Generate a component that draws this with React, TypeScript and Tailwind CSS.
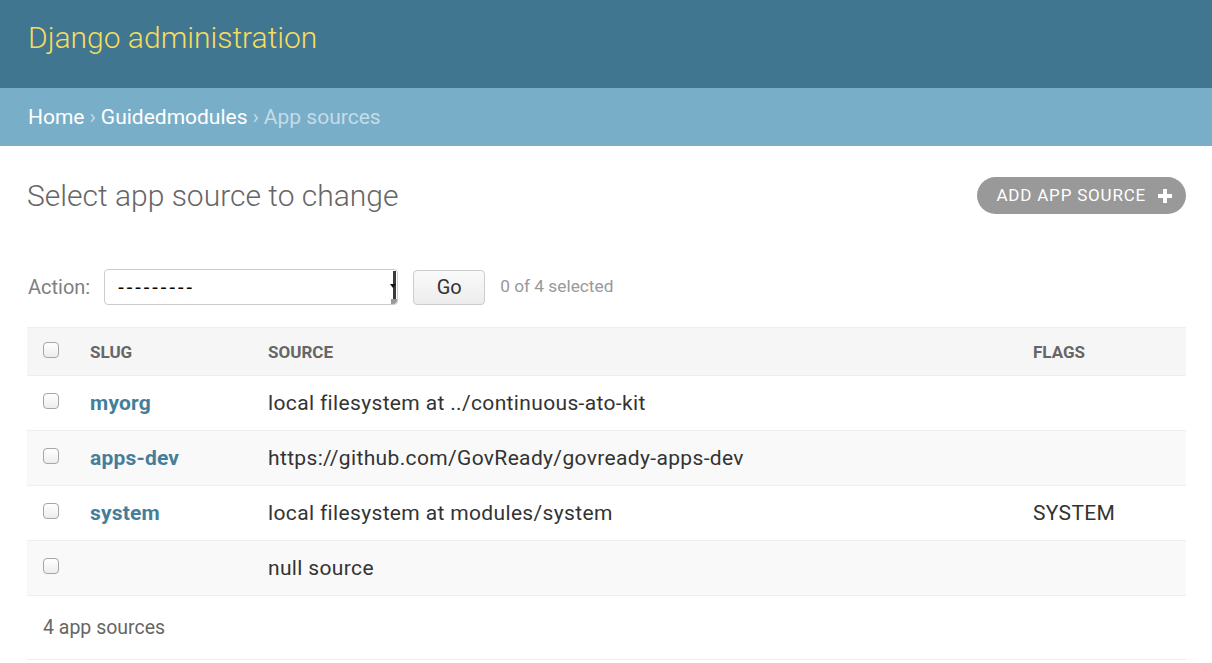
import React from "react";

function Checkbox() {
  return (
    <div className="w-[16px] h-[16px] rounded-[4px] border border-[#a6a6a6] bg-gradient-to-b from-[#ffffff] to-[#ededed]" />
  );
}

function PlusIcon() {
  return (
    <svg width="14" height="14" viewBox="0 0 14 14" className="block">
      <rect x="5" y="0" width="4" height="14" fill="#fff" />
      <rect x="0" y="5" width="14" height="4" fill="#fff" />
    </svg>
  );
}

const rows = [
  { slug: "myorg", source: "local filesystem at ../continuous-ato-kit", flags: "" },
  { slug: "apps-dev", source: "https://github.com/GovReady/govready-apps-dev", flags: "" },
  { slug: "system", source: "local filesystem at modules/system", flags: "SYSTEM" },
  { slug: "", source: "null source", flags: "" },
];

export default function App() {
  return (
    <div className="w-[1212px] h-[663px] overflow-hidden bg-white font-['Roboto','Liberation_Sans',sans-serif]">
      {/* Header */}
      <div className="h-[88px] bg-[#417690] pl-[28px] pt-[17px]">
        <div className="text-[30px] leading-[41px] font-light text-[#f5dd5d]">Django administration</div>
      </div>
      {/* Breadcrumbs */}
      <div className="h-[58px] bg-[#79aec8] pl-[28px] flex items-center text-[21px] text-[#c4dce8] pt-[1px]">
        <span className="text-white">Home</span>
        <span className="mx-[5px]">›</span>
        <span className="text-white">Guidedmodules</span>
        <span className="mx-[5px]">›</span>
        <span>App sources</span>
      </div>
      {/* Content */}
      <div className="pl-[27px] pr-[26px] pt-[31px]">
        <div className="flex items-center justify-between h-[37px]">
          <h1 className="text-[30px] font-light text-[#666] leading-[37px]">Select app source to change</h1>
          <div className="h-[37px] rounded-full bg-[#999] flex items-center pl-[19px] pr-[14px]">
            <span className="text-[17px] text-white tracking-[0.8px] uppercase">Add app source</span>
            <span className="ml-[12px]"><PlusIcon /></span>
          </div>
        </div>
        {/* Actions */}
        <div className="mt-[55px] h-[36px] flex items-center">
          <span className="text-[20px] text-[#808080] ml-[1px]">Action:</span>
          <div className="ml-[14px] w-[294px] h-[36px] rounded-[4px] border border-[#ccc] bg-white flex items-center relative">
            <span className="pl-[13px] text-[20px] text-black leading-none tracking-[3px]">---------</span>
            <div className="absolute right-[1px] top-[1px] bottom-[4px] w-[3px] bg-[#3a3a3a]" />
            <div className="absolute right-[1px] top-[14px] w-0 h-0 border-l-[3px] border-r-[3px] border-t-[4px] border-l-transparent border-r-transparent border-t-[#111]" />
            <div className="absolute right-0 bottom-0 w-[6px] h-[5px] bg-[#9a9a9a] rounded-br-[4px]" />
          </div>
          <div className="ml-[15px] w-[72px] h-[35px] rounded-[4px] border border-[#ccc] bg-gradient-to-b from-[#fafafa] to-[#ececec] flex items-center justify-center text-[20px] text-[#333]">
            Go
          </div>
          <span className="ml-[15px] text-[17.3px] text-[#999]">0 of 4 selected</span>
        </div>
        {/* Table */}
        <div className="mt-[22px] border-t border-[#eee]">
          <div className="grid grid-cols-[63px_178px_1fr_153px] h-[48px] bg-[#f6f6f6] border-b border-[#eee] items-center text-[17px] font-bold text-[#666] uppercase">
            <div className="pl-[16px] -mt-[4px]"><Checkbox /></div>
            <div className="mt-[2px]">Slug</div>
            <div className="mt-[2px]">Source</div>
            <div className="mt-[2px]">Flags</div>
          </div>
          {rows.map((r, i) => (
            <div
              key={i}
              className={`grid grid-cols-[63px_178px_1fr_153px] h-[55px] border-b border-[#eee] items-center text-[21px] ${i % 2 === 1 ? "bg-[#f9f9f9]" : "bg-white"}`}
            >
              <div className="pl-[16px] -mt-[4px]"><Checkbox /></div>
              <div className="font-bold text-[#447e9b] tracking-[0.2px] mt-[1px]">{r.slug}</div>
              <div className="text-[#333] tracking-[0.35px] mt-[1px]">{r.source}</div>
              <div className="text-[#333] tracking-[0.35px] mt-[1px]">{r.flags}</div>
            </div>
          ))}
          <div className="h-[64px] border-b border-[#eee] flex items-center pl-[16px] text-[19.5px] text-[#666]">
            4 app sources
          </div>
        </div>
      </div>
    </div>
  );
}
